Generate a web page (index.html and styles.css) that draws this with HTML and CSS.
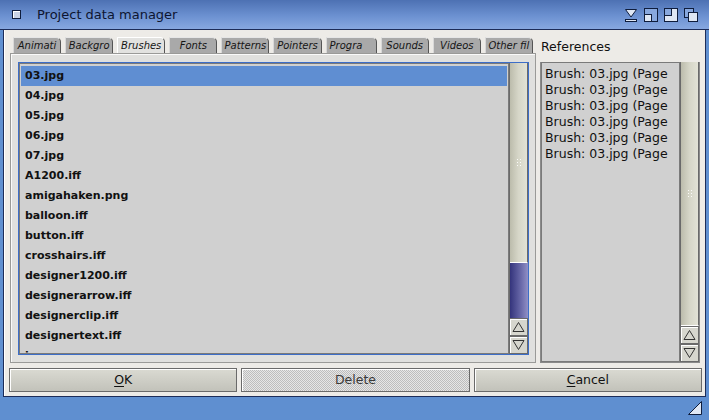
FILE: index.html
```html
<!DOCTYPE html>
<html>
<head>
<meta charset="utf-8">
<link rel="stylesheet" href="styles.css">
</head>
<body>
<div class="window">
  <!--title bar-->
  <div class="titlebar">
    <span class="close-gadget"></span>
    <span class="title">Project data manager</span>
    <div class="gadgets">
      <svg width="18" height="18" viewBox="0 0 18 18"><path d="M3.5 3.5 H14.5 L9 11 Z" fill="#dfe7f4" stroke="#0f1d3c"/><rect x="3.5" y="13.5" width="11" height="2" fill="#dfe7f4" stroke="#0f1d3c"/></svg>
      <svg width="18" height="18" viewBox="0 0 18 18"><rect x="2.5" y="2.5" width="13" height="13" fill="#88a8de" stroke="#0f1d3c"/><rect x="2.5" y="8.5" width="7" height="7" fill="#dfe7f4" stroke="#0f1d3c"/></svg>
      <svg width="18" height="18" viewBox="0 0 18 18"><rect x="2.5" y="2.5" width="13" height="13" fill="#dfe7f4" stroke="#0f1d3c"/><rect x="2.5" y="2.5" width="7" height="7" fill="#88a8de" stroke="#0f1d3c"/></svg>
      <svg width="18" height="18" viewBox="0 0 18 18"><rect x="2.5" y="2.5" width="9" height="9" fill="#88a8de" stroke="#0f1d3c"/><rect x="6.5" y="6.5" width="9" height="9" fill="#dfe7f4" stroke="#0f1d3c"/></svg>
    </div>
  </div>

  <div class="body">
    <div class="main">
      <!--tabs + file list-->
      <div class="tabbed">
        <div class="tabs">
          <div class="tab">Animati</div>
          <div class="tab">Backgro</div>
          <div class="tab active">Brushes</div>
          <div class="tab">Fonts</div>
          <div class="tab">Patterns</div>
          <div class="tab">Pointers</div>
          <div class="tab tab-left">Progra</div>
          <div class="tab">Sounds</div>
          <div class="tab">Videos</div>
          <div class="tab">Other fil</div>
        </div>
        <div class="panel">
          <div class="listgroup">
            <div class="list files">
              <div class="item selected">03.jpg</div>
              <div class="item">04.jpg</div>
              <div class="item">05.jpg</div>
              <div class="item">06.jpg</div>
              <div class="item">07.jpg</div>
              <div class="item">A1200.iff</div>
              <div class="item">amigahaken.png</div>
              <div class="item">balloon.iff</div>
              <div class="item">button.iff</div>
              <div class="item">crosshairs.iff</div>
              <div class="item">designer1200.iff</div>
              <div class="item">designerarrow.iff</div>
              <div class="item">designerclip.iff</div>
              <div class="item">designertext.iff</div>
              <div class="item">icon.png</div>
            </div>
            <div class="scroller">
              <div class="track blue">
                <div class="knob" style="height:199px"><span class="grip"></span></div>
              </div>
              <div class="arrow"><svg width="15" height="14" viewBox="0 0 15 14"><path d="M7.5 2.5 L13 11.5 H2 Z" fill="none" stroke="#333"/></svg></div>
              <div class="arrow"><svg width="15" height="14" viewBox="0 0 15 14"><path d="M2 2.5 H13 L7.5 11.5 Z" fill="none" stroke="#333"/></svg></div>
            </div>
          </div>
        </div>
      </div>

      <!--references-->
      <div class="refs">
        <div class="refs-label">References</div>
        <div class="refgroup">
          <div class="list reflist">
            <div class="ref">Brush: 03.jpg (Page</div>
            <div class="ref">Brush: 03.jpg (Page</div>
            <div class="ref">Brush: 03.jpg (Page</div>
            <div class="ref">Brush: 03.jpg (Page</div>
            <div class="ref">Brush: 03.jpg (Page</div>
            <div class="ref">Brush: 03.jpg (Page</div>
          </div>
          <div class="scroller">
            <div class="track">
              <div class="knob full"><span class="grip"></span></div>
            </div>
            <div class="arrow"><svg width="15" height="14" viewBox="0 0 15 14"><path d="M7.5 2.5 L13 11.5 H2 Z" fill="none" stroke="#333"/></svg></div>
            <div class="arrow"><svg width="15" height="14" viewBox="0 0 15 14"><path d="M2 2.5 H13 L7.5 11.5 Z" fill="none" stroke="#333"/></svg></div>
          </div>
        </div>
      </div>
    </div>

    <!--buttons-->
    <div class="buttons">
      <div class="button"><u>O</u>K</div>
      <div class="button disabled">Delete</div>
      <div class="button"><u>C</u>ancel</div>
    </div>
  </div>

  <div class="statusbar">
    <svg class="resize" width="16" height="16" viewBox="0 0 16 16"><path d="M14.5 1.5 V14.5 H1.5 Z" fill="#dfe7f4" stroke="#0f1d3c"/></svg>
  </div>
</div>
</body>
</html>
```

FILE: styles.css
```css
body {
	margin: 0;
	font-family: "DejaVu Sans", sans-serif;
}
.window {
	width: 709px;
	height: 420px;
	background: #5f8fd0;
	display: flex;
	flex-direction: column;
}

/* title bar */
.titlebar {
	height: 29px;
	flex: none;
	border-bottom: 1px solid #1c2c58;
	background: linear-gradient(#4d71b3, #6c91d1 55%, #87a8e0);
	display: flex;
	align-items: center;
	padding-left: 12px;
}
.close-gadget {
	width: 7px;
	height: 7px;
	border: 1px solid #0f1d3c;
	background: #c9d3e6;
	box-shadow: inset 1px 1px #fff;
}
.title {
	margin-left: 16px;
	font-size: 13px;
	color: #0d1530;
}
.gadgets {
	margin-left: auto;
	margin-right: 9px;
	display: flex;
	gap: 2px;
}
.gadgets svg {
	display: block;
}

/* main area */
.body {
	height: 367px;
	box-sizing: border-box;
	flex: none;
	margin: 0 3px;
	border: 1px solid #1c2c58;
	border-top: none;
	background: #edebe7;
	box-shadow: inset 1px 0 #fff;
	padding: 7px 3px 0 5px;
}
.main {
	display: flex;
	height: 326px;
}
.tabbed {
	width: 526px;
	margin-left: 1px;
	display: flex;
	flex-direction: column;
	min-height: 0;
}
.tabs {
	height: 16px;
	flex: none;
	display: flex;
	gap: 4px;
	margin: 0 3px;
}
.tab {
	flex: 1;
	background: #a9a9a9;
	border: 1px solid #8a8a8a;
	border-top-color: #e6e6e6;
	border-left-color: #d8d8d8;
	border-right-color: #555;
	border-bottom: none;
	border-radius: 1px 5px 0 0;
	font-size: 10px;
	font-style: italic;
	color: #151515;
	text-align: center;
	line-height: 16px;
	white-space: nowrap;
	overflow: hidden;
}
.tab.tab-left {
	text-align: left;
	padding-left: 3px;
}
.tab.active {
	background: #e2e2e0;
	border-top-color: #fff;
	border-left-color: #fff;
}
.panel {
	flex: 1;
	min-height: 0;
	background: #e0e0de;
	border: 1px solid #9a9a98;
	box-shadow: inset 1px 1px #fafafa;
	padding: 8px 6px 7px 7px;
	display: flex;
}
.listgroup {
	flex: 1;
	min-height: 0;
	display: flex;
	border: 1px solid #3d6ec8;
}

/* lists */
.list {
	flex: 1;
	min-height: 0;
	background: #d0d0d0;
	border: 1px solid #7a7a7a;
	overflow: hidden;
}
.files {
	padding-top: 2px;
	font-weight: bold;
	font-size: 11px;
	color: #111;
}
.item {
	height: 20px;
	line-height: 20px;
	margin: 0 1px;
	padding-left: 4px;
	white-space: nowrap;
}
.item.selected {
	background: #5f8ed2;
}
.reflist {
	padding: 3px 0 0 3px;
	font-size: 12.5px;
	color: #111;
}
.ref {
	height: 16px;
	line-height: 16px;
	white-space: nowrap;
}

/* scrollers */
.scroller {
	width: 18px;
	display: flex;
	flex-direction: column;
	border-left: 1px solid #6a6a6a;
}
.track {
	flex: 1;
	display: flex;
	flex-direction: column;
}
.track.blue {
	background: linear-gradient(90deg, #34347c, #6868a8 60%, #9090c6);
}
.knob {
	flex: none;
	background: linear-gradient(90deg, #bcbcac, #d6d6c8 50%, #e2e2d6);
	border-right: 1px solid #6a6a6a;
	border-bottom: 1px solid #fff;
	display: flex;
	align-items: center;
	justify-content: center;
}
.knob.full {
	flex: 1;
}
.grip {
	width: 5px;
	height: 9px;
	background: radial-gradient(circle, #fff 0.8px, transparent 1px) 0 0 / 3px 3px;
	opacity: 0.9;
}
.arrow {
	height: 16px;
	flex: none;
	border: 1px solid #6a6a6a;
	border-left: none;
	background: #d6d6ce;
	box-shadow: inset 1px 1px #fff;
	display: flex;
	align-items: center;
	justify-content: center;
}
.refs {
	width: 160px;
	margin-left: 4px;
	margin-right: 2px;
	display: flex;
	flex-direction: column;
}
.refs-label {
	height: 25px;
	flex: none;
	font-size: 12.5px;
	line-height: 20px;
	padding-left: 1px;
	color: #111;
}
.refgroup {
	height: 300px;
	display: flex;
	border: 1px solid #8a8a8a;
	border-top: none;
}

/* buttons */
.buttons {
	display: flex;
	gap: 4px;
	margin-top: 5px;
	height: 24px;
}
.button {
	flex: 1;
	border: 1px solid #6a6a6a;
	background: linear-gradient(#dadad2, #c2c2ba);
	box-shadow: inset 1px 1px #fff;
	font-size: 12.5px;
	color: #111;
	text-align: center;
	line-height: 22px;
}
.button u {
	text-underline-offset: 2px;
}
.button.disabled {
	background: repeating-conic-gradient(#bdbdbd 0 25%, #e6e6e6 0 50%) 0 0 / 2px 2px;
	color: #3a3a3a;
}

.statusbar {
	flex: 1;
	display: flex;
	justify-content: flex-end;
	align-items: flex-end;
}
.resize {
	margin: 0 6px 4px 0;
}
```
